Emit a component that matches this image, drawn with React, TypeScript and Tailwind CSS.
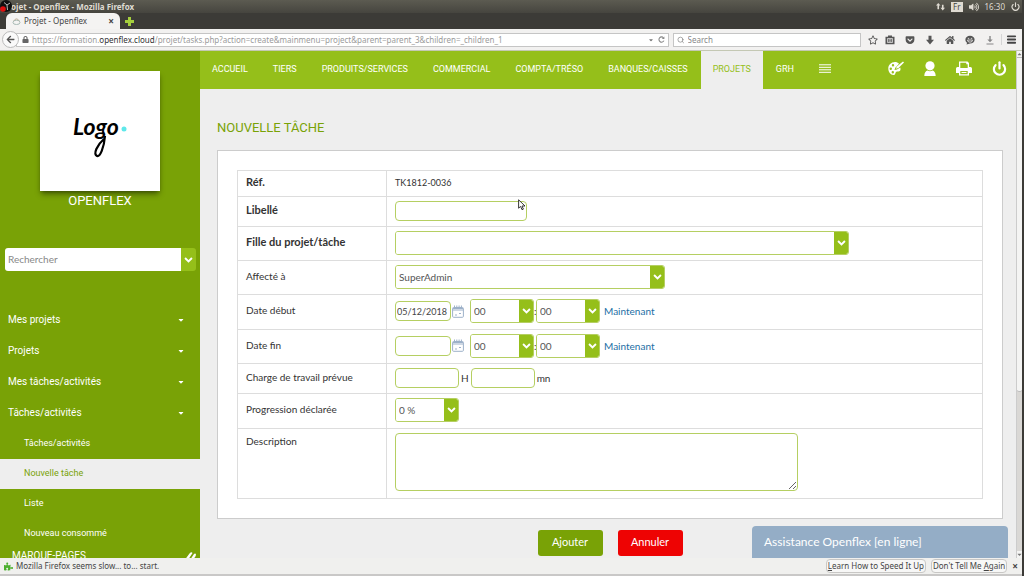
import type { ReactNode } from 'react';
import { Menu, Power, Search } from 'lucide-react';
import {
  FaArrowLeft,
  FaCaretDown,
  FaCaretUp,
  FaGetPocket,
  FaHome,
  FaLock,
  FaPuzzlePiece,
  FaRegStar,
  FaVolumeUp,
} from 'react-icons/fa';

const navItems = ['ACCUEIL', 'TIERS', 'PRODUITS/SERVICES', 'COMMERCIAL', 'COMPTA/TRÉSO', 'BANQUES/CAISSES', 'PROJETS', 'GRH'];
const menuItems = ['Mes projets', 'Projets', 'Mes tâches/activités', 'Tâches/activités'];
const subItems = ['Tâches/activités', 'Nouvelle tâche', 'Liste', 'Nouveau consommé'];

function Chevron() {
  return (
    <svg viewBox="0 0 10 7" className="h-[6px] w-[9px]" fill="none" stroke="white" strokeWidth="2.2">
      <path d="M1 1.200l4 4 4-4" />
    </svg>
  );
}

function TitleBar() {
  return (
    <div className="relative flex h-[13px] items-center justify-between bg-gradient-to-b from-[#5c5b51] to-[#46453f] pl-[11px] pr-[2px] text-[#dfdbd2]">
      <svg viewBox="0 0 12 12" className="absolute left-0 top-0 size-3">
        <circle cx="6" cy="6" r="6" fill="#111" />
        <path d="M4 2.500l3 2.500 3-2M7 5l.5 5" stroke="#ccc" strokeWidth=".9" fill="none" />
        <circle cx="3" cy="9" r="2.800" fill="#e01010" />
      </svg>
      <span className="text-[8px] font-bold">ojet - Openflex - Mozilla Firefox</span>
      <div className="flex items-center gap-[6px] text-[8px]">
        <svg viewBox="0 0 10 10" className="size-[9px]" fill="currentColor">
          <path d="M2.500 1L5 4H3.400v4H1.600V4H0zM7.500 9.500L5 6.500h1.600V3h1.800v3.500H10z" />
        </svg>
        <span className="bg-[#dfdbd2] px-[2px] leading-[10px] text-[#46453f]">Fr</span>
        <FaVolumeUp className="size-[10px]" />
        <span>16:30</span>
        <Power className="size-[9px]" strokeWidth={3} />
      </div>
    </div>
  );
}

function TabStrip() {
  return (
    <div className="flex h-4 items-center bg-[#3c3b37]">
      <div className="ml-[6px] flex h-full w-[114px] items-center rounded-t-md bg-[#f4f3f2] pl-[6px] pr-[6px] text-[8px] text-[#444]">
        <svg viewBox="0 0 10 8" className="mr-[3px] h-[7px] w-[9px]" fill="none" stroke="#9fb3ae">
          <ellipse cx="5" cy="5" rx="4" ry="2.500" />
          <path d="M2 3q3-4 6 0" stroke="#b9a58c" />
        </svg>
        <span className="flex-1">Projet - Openflex</span>
        <button aria-label="Fermer l'onglet" className="text-[10px] font-bold leading-none">×</button>
      </div>
      <button aria-label="Nouvel onglet" className="ml-[5px]">
        <svg viewBox="0 0 9 9" className="size-[9px]" fill="#a5cf3d">
          <path d="M3 0h3v3h3v3H6v3H3V6H0V3h3z" />
        </svg>
      </button>
    </div>
  );
}

function Toolbar() {
  return (
    <div className="flex h-[22px] items-center border-b border-[#c4c8b4] bg-[#f2f1f0] pl-[2px] pr-[5px] text-[8px] text-[#555]">
      <button aria-label="Retour" className="z-10 flex size-[17px] shrink-0 items-center justify-center rounded-full border border-[#bbb] bg-[#fafafa]">
        <FaArrowLeft className="size-[9px]" />
      </button>
      <div className="-ml-[3px] flex h-[14px] flex-1 items-center border border-[#c5c5c5] bg-white pl-[5px] pr-[3px] text-[#9b9b9b]">
        <FaLock className="mr-[3px] size-[7px] text-[#666]" />
        <span className="flex-1 whitespace-nowrap">
          https://formation.<span className="text-[#333]">openflex.cloud</span>
          /projet/tasks.php?action=create&amp;mainmenu=project&amp;parent=parent_3&amp;children=_children_1
        </span>
        <FaCaretDown className="size-[6px] text-[#777]" />
        <svg viewBox="0 0 8 8" className="ml-1 size-[7px]" fill="none" stroke="#888" strokeWidth="1.2">
          <path d="M6.800 5.300A3 3 0 116.300 2" />
          <path d="M7.300.5v3h-3z" fill="#888" stroke="none" />
        </svg>
      </div>
      <label className="ml-1 flex h-[14px] w-[188px] items-center border border-[#c5c5c5] bg-white pl-[3px]">
        <Search className="mr-[3px] size-[8px] text-[#777]" />
        <input aria-label="Search" placeholder="Search" className="w-full placeholder:text-[#888]" />
      </label>
      <div className="ml-[7px] flex items-center gap-[10px] text-[#555]">
        <FaRegStar className="size-[10px]" />
        <svg viewBox="0 0 10 10" className="-ml-[3px] size-[10px]">
          <path d="M3 1.800V.5h4v1.300h2.500v7.400H.5V1.800z" fill="#555" />
          <path d="M2.500 3.500h5v4h-5zM3.500 4.800h3M3.500 6.200h3" stroke="#f2f1f0" strokeWidth=".7" fill="none" />
        </svg>
        <FaGetPocket className="size-[10px]" />
        <svg viewBox="0 0 10 10" className="size-[10px]" fill="currentColor">
          <path d="M3.500.8h3v4H9L5 9.500 1 4.800h2.500z" />
        </svg>
        <FaHome className="size-[10px]" />
        <svg viewBox="0 0 10 10" className="size-[10px]">
          <path d="M5 .8c2.700 0 4.600 1.700 4.600 3.900S7.700 8.600 5 8.600L1.500 9.600l.6-1.800C1 7 .4 6 .4 4.700.4 2.500 2.300.8 5 .8z" fill="#555" />
          <path d="M2.500 5h5a2.500 2.200 0 01-5 0zM2.800 3.400h1.400M5.800 3.400h1.400" stroke="#f2f1f0" strokeWidth=".8" fill="none" />
        </svg>
        <svg viewBox="0 0 10 10" className="size-[10px]" fill="#888">
          <path d="M4.300 1h1.400v3.500h2L5 7.300 2.300 4.500h2zM1.500 8.500h7v1h-7z" />
        </svg>
        <button aria-label="Ouvrir le menu" className="-ml-1 border-l border-[#d5d5d5] pl-1">
          <Menu className="size-[11px] text-[#444]" strokeWidth={4} />
        </button>
      </div>
    </div>
  );
}

function Sidebar() {
  return (
    <aside className="w-[200px] shrink-0 overflow-hidden bg-[#79a206] text-white">
      <div className="flex flex-col items-center pt-5">
        <div className="flex size-[120px] items-center justify-center bg-white shadow-md shadow-black/40">
          <svg viewBox="0 0 60 60" className="size-[60px]" role="img" aria-label="Logo">
            <text x="3" y="34" fontSize="23" fontStyle="italic" fontWeight="700" fontFamily="Lato, sans-serif" fill="#000">Logo</text>
            <path d="M35 35C34 47 30 56 27 55C23 53 27 44 34 38" fill="none" stroke="#000" strokeWidth="2.200" />
            <circle cx="54" cy="28" r="2.500" fill="#5fe8ea" />
          </svg>
        </div>
        <span className="mt-[2px] text-[13px] leading-4">OPENFLEX</span>
      </div>
      <div className="ml-[5px] mr-1 mt-[39px] flex h-[23px] overflow-hidden rounded-[3px]">
        <input aria-label="Rechercher" placeholder="Rechercher" className="min-w-0 flex-1 bg-white px-[3px] font-['Lato',sans-serif] text-[10px] placeholder:text-[#888]" />
        <button aria-label="Lancer la recherche" className="flex w-[15px] items-center justify-center bg-[#95bf1a]">
          <Chevron />
        </button>
      </div>
      <nav className="mt-[33px]">
        {menuItems.map((item) => (
          <a key={item} href="#" className="flex h-[31px] items-center justify-between pl-2 pr-[15px] text-[10px]">
            {item}
            <FaCaretDown className="size-2" />
          </a>
        ))}
        <div className="pt-px">
          {subItems.map((item) => (
            <a
              key={item}
              href="#"
              className={`flex h-[30px] items-center pl-6 text-[9px] ${item === 'Nouvelle tâche' ? 'bg-[#eee] text-[#79a206]' : ''}`}
            >
              {item}
            </a>
          ))}
        </div>
      </nav>
      <div className="flex items-center justify-between pl-3 pr-1 text-[10px] leading-[14px]">
        MARQUE-PAGES
        <svg viewBox="0 0 12 10" className="h-[10px] w-3" fill="white">
          <path d="M0 10L5.500 2.500Q7.500.5 8.500 2L4 9zM6 9l4-6q1.500-1 2 .5Q12 6 8 9z" />
        </svg>
      </div>
    </aside>
  );
}

function TopNav() {
  return (
    <header className="flex h-[38px] items-center justify-between bg-[#95bf1a] pr-[9px] text-white">
      <nav className="flex h-full items-center gap-px text-[9px]">
        {navItems.map((item) => (
          <a
            key={item}
            href="#"
            className={`flex h-full items-center px-3 ${item === 'PROJETS' ? 'bg-[#eee] text-[#95bf1a]' : ''}`}
          >
            {item}
          </a>
        ))}
        <button aria-label="Plus" className="px-3 pb-1">
          <svg viewBox="0 0 12 9" className="h-[9px] w-3" stroke="white">
            <path d="M0 .8h12M0 3.300h12M0 5.800h12M0 8.300h12" />
          </svg>
        </button>
      </nav>
      <div className="flex items-center gap-5 pb-1">
        <button aria-label="Thème">
          <svg viewBox="0 0 16 16" className="size-4" fill="white">
            <path fillRule="evenodd" d="M7 2C3 2 .3 5 .3 8.500S2.500 15 5.500 15c2 0 1.500-2 2.500-3s4 .5 4.500-2.500c.1-.8 0-1.500-.3-2L9 9.500 6.500 10 7.300 7.800l3.700-4C10 2.600 8.500 2 7 2zM5 4a1.200 1.200 0 100 2.400A1.200 1.200 0 005 4zM2.800 7.500a1.200 1.200 0 100 2.400 1.200 1.200 0 000-2.400zM4.800 11a1.200 1.200 0 100 2.400 1.200 1.200 0 000-2.400z" />
            <path d="M16 2.500L10.500 8l-2.500.8.800-2.300L15 1.500z" />
          </svg>
        </button>
        <button aria-label="Utilisateur">
          <svg viewBox="0 0 12 15" className="h-[15px] w-3" fill="white">
            <circle cx="6" cy="4.800" r="4.600" />
            <path d="M.3 15c0-3 1.500-5 3.200-5.400Q6 11 8.500 9.600C10.200 10 11.700 12 11.700 15z" />
          </svg>
        </button>
        <button aria-label="Imprimer">
          <svg viewBox="0 0 16 15" className="h-[15px] w-4" fill="white">
            <path fillRule="evenodd" d="M3 .5h8.500L13 2v4h1.500Q16 6 16 7.500V12h-3v2.500H3V12H0V7.500Q0 6 1.500 6H3zM4.300 1.800V7h7.400V3.200h-1.400V1.800zM4.300 10v3.300h7.400V10z" />
            <path d="M5.500 11h5v1h-5z" />
          </svg>
        </button>
        <button aria-label="Déconnexion">
          <Power className="size-[15px]" strokeWidth={3.5} />
        </button>
      </div>
    </header>
  );
}

type SelectProps = { id?: string; label?: string; value: string; width: string };

function Select({ id, label, value, width }: SelectProps) {
  return (
    <div className={`relative h-6 overflow-hidden rounded-[3px] border border-[#b5cf62] ${width}`}>
      <select id={id} aria-label={label} className="size-full appearance-none bg-white pl-[3px] text-[10px] text-[#555]">
        <option>{value}</option>
      </select>
      <span className="pointer-events-none absolute inset-y-0 right-0 flex w-[14px] items-center justify-center bg-[#95bf1a]">
        <Chevron />
      </span>
    </div>
  );
}

type FieldProps = { id?: string; label?: string; value?: string; width: string };

function Field({ id, label, value, width }: FieldProps) {
  return (
    <input
      id={id}
      aria-label={label}
      defaultValue={value}
      className={`h-5 rounded border border-[#b5cf62] bg-white px-px text-[9px] text-[#444] ${width}`}
    />
  );
}

function DateRow({ id, value }: { id: string; value?: string }) {
  return (
    <div className="flex items-center">
      <Field id={id} value={value} width="w-14" />
      <button type="button" aria-label="Calendrier" className="mx-px">
        <svg viewBox="0 0 12 13" className="h-[13px] w-3" fill="none" stroke="#9db1c9">
          <rect x=".6" y="2.500" width="10.800" height="9.800" rx="1" />
          <path d="M1 3.500h10M1 5h10M2.500.5v2M4.800.5v2M7.100.5v2M9.400.5v2M7 8.500h2M3 10h2" />
        </svg>
      </button>
      <div className="ml-[5px] flex items-center">
        <Select label="Heures" value="00" width="w-16" />
        <span className="w-[2px]">:</span>
        <Select label="Minutes" value="00" width="w-16" />
      </div>
      <a href="#" className="ml-1 text-[#1d6fa5]">Maintenant</a>
    </div>
  );
}

type RowProps = { label: string; htmlFor?: string; height: string; bold?: boolean; top?: boolean; children: ReactNode };

function Row({ label, htmlFor, height, bold, top, children }: RowProps) {
  return (
    <tr className={`border border-[#ddd] ${height}`}>
      <th
        className={`w-[149px] border-r border-[#ddd] pb-1 pl-2 text-left ${bold ? 'text-[11px] font-bold' : 'font-normal'} ${top ? 'pt-[6px] align-top' : ''}`}
      >
        <label htmlFor={htmlFor}>{label}</label>
      </th>
      <td className={`pl-2 ${top ? 'pt-1 align-top' : 'pb-[2px]'}`}>{children}</td>
    </tr>
  );
}

function TaskForm() {
  return (
    <form className="pl-[17px] pr-[13px]">
      <div className="border border-[#ccc] bg-white p-[19px]">
        <table className="w-full border-collapse font-['Lato',sans-serif] text-[10px] leading-3 text-[#333]">
          <tbody>
            <Row label="Réf." height="h-[26px]" bold>
              <span className="text-[9px]">TK1812-0036</span>
            </Row>
            <Row label="Libellé" htmlFor="libelle" height="h-[30px]" bold>
              <div className="flex"><Field id="libelle" width="w-[132px]" /></div>
            </Row>
            <Row label="Fille du projet/tâche" htmlFor="parent" height="h-[34px]" bold>
              <Select id="parent" value="" width="w-[454px]" />
            </Row>
            <Row label="Affecté à" htmlFor="user" height="h-[34px]">
              <Select id="user" value="SuperAdmin" width="w-[270px]" />
            </Row>
            <Row label="Date début" htmlFor="start" height="h-[35px]">
              <DateRow id="start" value="05/12/2018" />
            </Row>
            <Row label="Date fin" htmlFor="end" height="h-[34px]">
              <DateRow id="end" />
            </Row>
            <Row label="Charge de travail prévue" htmlFor="hours" height="h-[30px]">
              <div className="flex items-center">
                <Field id="hours" width="w-16" />
                <span className="mx-[2px]">H</span>
                <Field label="Minutes prévues" width="w-16" />
                <span className="ml-[2px]">mn</span>
              </div>
            </Row>
            <Row label="Progression déclarée" htmlFor="progress" height="h-[35px]">
              <Select id="progress" value="0 %" width="w-16" />
            </Row>
            <Row label="Description" htmlFor="description" height="h-[70px]" top>
              <textarea id="description" className="block h-[58px] w-[403px] rounded border border-[#b5cf62] bg-white" />
            </Row>
          </tbody>
        </table>
      </div>
      <div className="mt-[11px] flex justify-center gap-[15px] font-['Lato',sans-serif] text-[11px] text-white">
        <button type="submit" className="h-[26px] w-[65px] rounded-[3px] bg-[#79a206] pb-[2px]">Ajouter</button>
        <button type="button" className="h-[26px] w-[65px] rounded-[3px] bg-[#ee0303] pb-[2px]">Annuler</button>
      </div>
    </form>
  );
}

function Scrollbar() {
  return (
    <div className="flex w-[6px] shrink-0 flex-col border-l border-[#ccc] bg-[#dad8d5]">
      <FaCaretUp className="h-[6px] w-full bg-[#f4f4f3] text-[#777]" />
      <div className="h-[335px] rounded-b border-y border-[#bbb] bg-[#f4f4f3]" />
      <FaCaretDown className="mt-auto h-[7px] w-full bg-[#f4f4f3] text-[#777]" />
    </div>
  );
}

function StatusBar() {
  return (
    <footer className="flex h-[18px] items-center border-b-2 border-[#c9c8c7] bg-[#f0f0ee] px-1 text-[8px] text-[#444]">
      <FaPuzzlePiece className="mr-[3px] size-[9px] text-[#4caf2f]" />
      <span className="flex-1">Mozilla Firefox seems slow... to... start.</span>
      <button className="mr-[5px] h-[14px] rounded-sm border border-[#c8c7c5] bg-[#f7f7f6] px-px leading-none">
        <u>L</u>earn How to Speed It Up
      </button>
      <button className="mr-[5px] h-[14px] rounded-sm border border-[#c8c7c5] bg-[#f7f7f6] px-px leading-none">
        Don't Tell Me <u>A</u>gain
      </button>
      <button aria-label="Fermer" className="text-[10px] font-bold leading-none">×</button>
    </footer>
  );
}

export default function App() {
  return (
    <div className="relative flex h-screen flex-col overflow-hidden border-r-2 border-[#3c3b37] bg-[#eee] font-['Noto_Sans',sans-serif]">
      <TitleBar />
      <TabStrip />
      <Toolbar />
      <div className="flex min-h-0 flex-1 font-['Roboto',sans-serif]">
        <Sidebar />
        <main className="relative min-w-0 flex-1 overflow-hidden">
          <TopNav />
          <h1 className="mb-3 ml-[17px] mt-[29px] text-[13px] leading-5 text-[#79a206]">NOUVELLE TÂCHE</h1>
          <TaskForm />
          <button className="absolute bottom-0 right-2 h-8 w-64 rounded-t bg-[#94adc6] pl-3 text-left font-['Lato',sans-serif] text-xs text-white">
            Assistance Openflex [en ligne]
          </button>
        </main>
        <Scrollbar />
      </div>
      <StatusBar />
      <svg viewBox="0 0 8 12" className="pointer-events-none absolute left-[518px] top-[199px] h-3 w-2" fill="white" stroke="#222" strokeWidth=".9">
        <path d="M.6.8v8.400l2-1.800 1.400 3.300 1.400-.6L4 7h3z" />
      </svg>
    </div>
  );
}
